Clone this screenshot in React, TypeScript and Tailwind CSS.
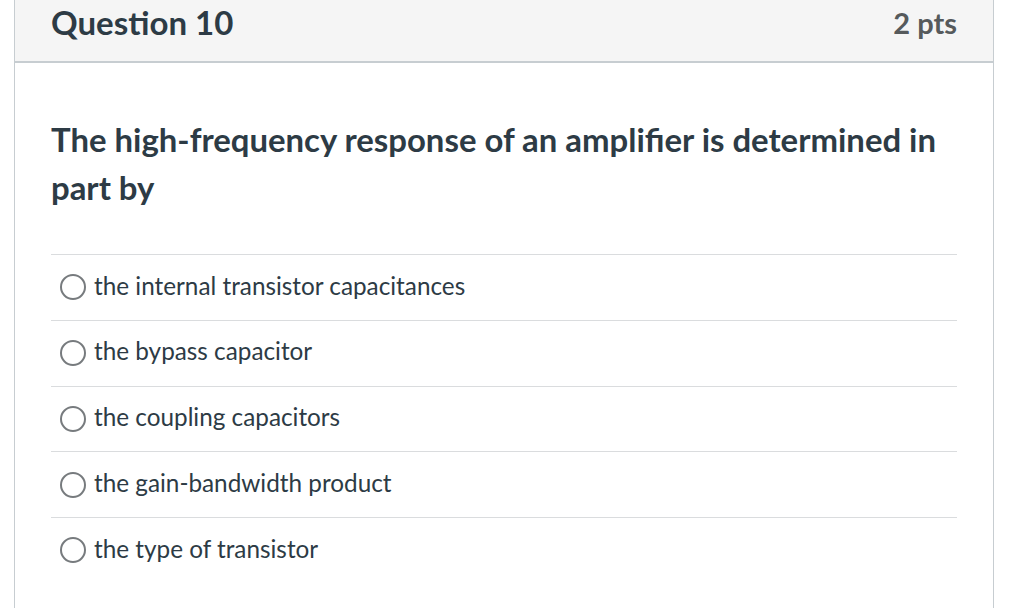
import React from "react";

const answers = [
  "the internal transistor capacitances",
  "the bypass capacitor",
  "the coupling capacitors",
  "the gain-bandwidth product",
  "the type of transistor",
];

export default function App() {
  return (
    <div
      className="w-[1024px] h-[608px] overflow-hidden bg-white"
      style={{ fontFamily: "Lato, 'Noto Sans', sans-serif" }}
    >
      <div className="ml-[14px] w-[980px] h-full border-x border-[#c7cdd1]">
        {/* Header */}
        <div className="h-[63px] bg-[#f5f5f5] border-b-2 border-[#c7cdd1] flex items-center justify-between px-[36px]">
          <h2 className="text-[33px] font-bold text-[#2d3b45] leading-none -mt-[16px]">
            Question 10
          </h2>
          <div className="text-[29px] font-bold text-[#565a5c] leading-none -mt-[16px]">
            2 pts
          </div>
        </div>

        {/* Body */}
        <div className="px-[36px] pt-[53px]">
          <p className="text-[32.9px] font-bold text-[#2d3b45] leading-[48px]">
            The high-frequency response of an amplifier is determined in part by
          </p>
          <div className="mt-[42px]">
            {answers.map((a) => (
              <div
                key={a}
                className="h-[65.75px] border-t border-[#dadcde] flex items-center pl-[9px]"
              >
                <span className="w-[26px] h-[26px] rounded-full border-2 border-[#777b7e] bg-white shrink-0" />
                <span className="ml-[8px] text-[24.3px] text-[#2d3b45] leading-none -mt-[3px]">
                  {a}
                </span>
              </div>
            ))}
          </div>
        </div>
      </div>
    </div>
  );
}
